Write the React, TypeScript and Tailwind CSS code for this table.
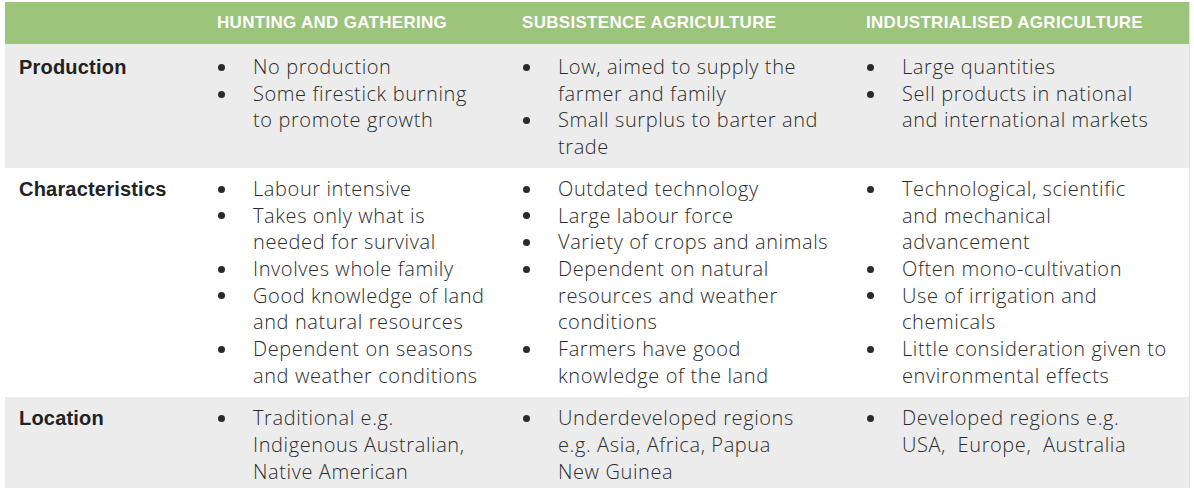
const rows: { label: string; bg: string; pad: string; cols: string[][][] }[] = [
  {
    label: 'Production',
    bg: 'bg-[#ececec]',
    pad: 'pt-[10px] pb-[7px]',
    cols: [
      [['No production'], ['Some firestick burning', 'to promote growth']],
      [['Low, aimed to supply the', 'farmer and family'], ['Small surplus to barter and', 'trade']],
      [['Large quantities'], ['Sell products in national', 'and international markets']],
    ],
  },
  {
    label: 'Characteristics',
    bg: 'bg-white',
    pad: 'pt-[8px] pb-[8px]',
    cols: [
      [
        ['Labour intensive'],
        ['Takes only what is', 'needed for survival'],
        ['Involves whole family'],
        ['Good knowledge of land', 'and natural resources'],
        ['Dependent on seasons', 'and weather conditions'],
      ],
      [
        ['Outdated technology'],
        ['Large labour force'],
        ['Variety of crops and animals'],
        ['Dependent on natural', 'resources and weather', 'conditions'],
        ['Farmers have good', 'knowledge of the land'],
      ],
      [
        ['Technological, scientific', 'and mechanical', 'advancement'],
        ['Often mono-cultivation'],
        ['Use of irrigation and', 'chemicals'],
        ['Little consideration given to', 'environmental effects'],
      ],
    ],
  },
  {
    label: 'Location',
    bg: 'bg-[#ececec]',
    pad: 'pt-[8px] pb-[2px]',
    cols: [
      [['Traditional e.g.', 'Indigenous Australian,', 'Native American']],
      [['Underdeveloped regions', 'e.g. Asia, Africa, Papua', 'New Guinea']],
      [['Developed regions e.g.', 'USA,  Europe,  Australia']],
    ],
  },
]

const headers = ['HUNTING AND GATHERING', 'SUBSISTENCE AGRICULTURE', 'INDUSTRIALISED AGRICULTURE']

const grid = 'grid grid-cols-[200px_305px_344px_1fr]'

const Bullet = ({ lines }: { lines: string[] }) => (
  <li className="flex">
    <div className="w-[36px] h-[26.7px] flex items-center shrink-0">
      <span className="ml-[1px] w-[7px] h-[7px] rounded-full bg-[#2a2a2a]"></span>
    </div>
    <div>
      {lines.map((l, i) => (
        <div key={i} className="whitespace-pre">{l}</div>
      ))}
    </div>
  </li>
)

export default function App() {
  return (
    <div className="w-[1194px] h-[494px] bg-white pt-[2px] pl-[5px] font-['Open_Sans',sans-serif]">
      <div className="w-[1185px] border-r border-[#e2e2e2]">
        <div className={`${grid} h-[42px] bg-[#9dc47b] items-center`}>
          <div></div>
          {headers.map((h) => (
            <div
              key={h}
              className="pl-[12px] text-white font-bold text-[17px] tracking-[0.3px] font-['Liberation_Sans',Arial,sans-serif]"
            >
              {h}
            </div>
          ))}
        </div>
        {rows.map((r) => (
          <div
            key={r.label}
            className={`${grid} ${r.bg} ${r.pad} text-[20px] leading-[26.7px] font-light tracking-[0.6px] text-[#2c2c2c]`}
          >
            <div className="pl-[14px] font-bold tracking-[0.2px] text-[#222] font-['Liberation_Sans',Arial,sans-serif]">
              {r.label}
            </div>
            {r.cols.map((c, i) => (
              <ul key={i} className="pl-[12px]">
                {c.map((lines, j) => (
                  <Bullet key={j} lines={lines} />
                ))}
              </ul>
            ))}
          </div>
        ))}
      </div>
    </div>
  )
}
